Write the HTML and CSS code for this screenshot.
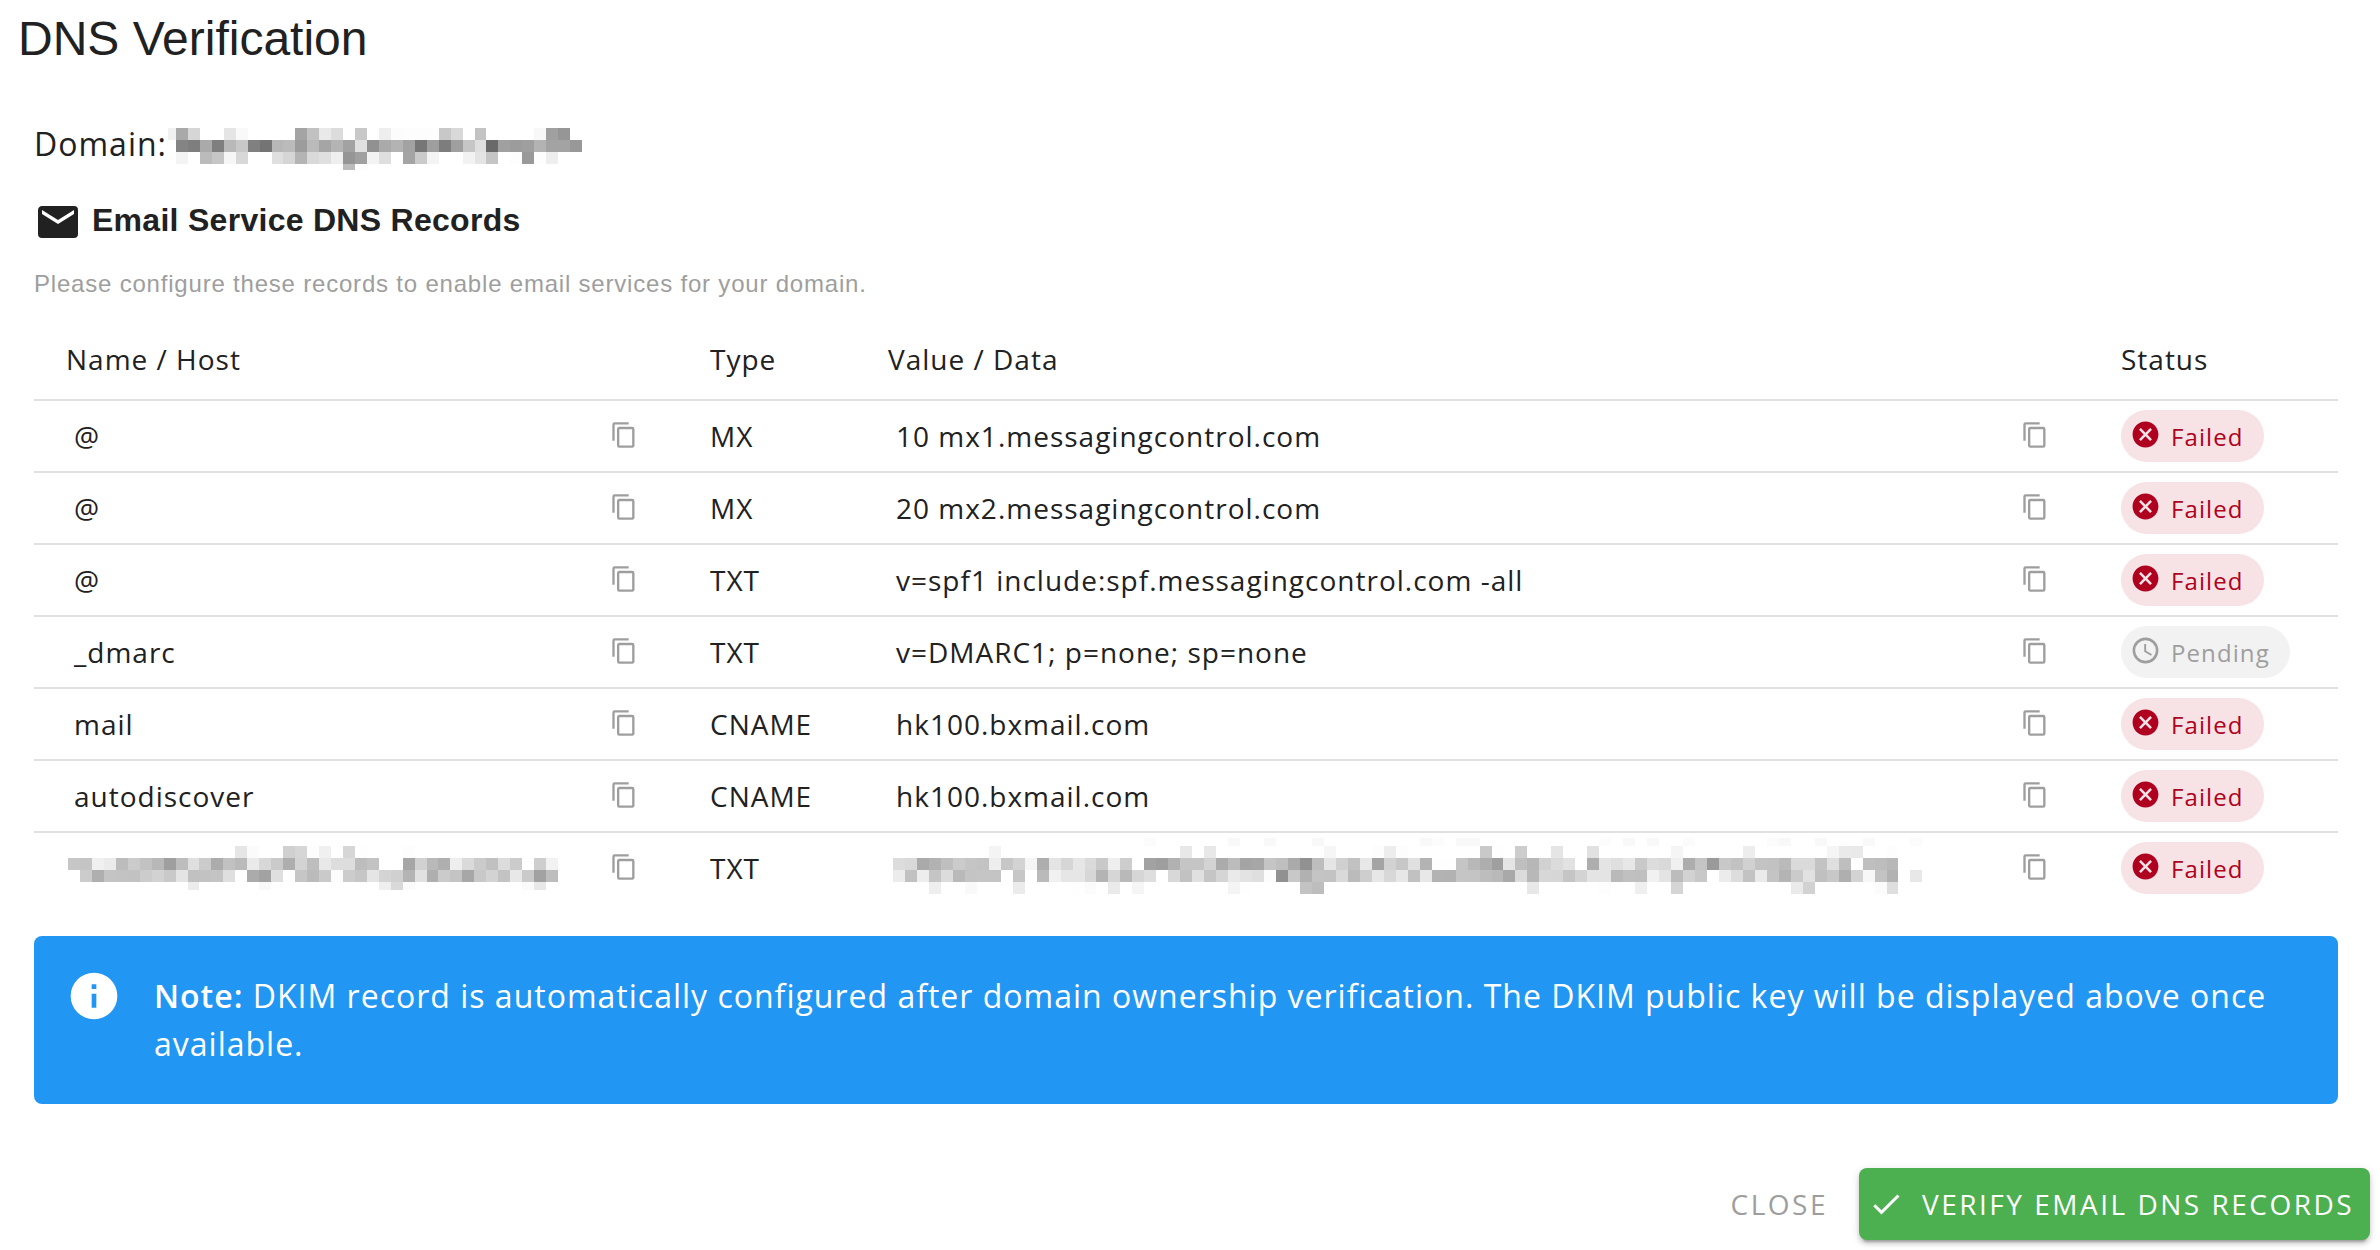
FILE: index.html
```html
<!DOCTYPE html>
<html lang="en">
<head>
  <meta charset="UTF-8">
  <title>DNS Verification</title>
  <meta name="viewport" content="width=device-width, initial-scale=1">
  <link rel="stylesheet" href="styles.css">
</head>
<body>
  <svg class="sprite" aria-hidden="true">
    <symbol id="i-copy" viewBox="0 0 24 24"><path d="M19 21H8V7h11m0-2H8a2 2 0 0 0-2 2v14a2 2 0 0 0 2 2h11a2 2 0 0 0 2-2V7a2 2 0 0 0-2-2m-3-4H4a2 2 0 0 0-2 2v14h2V3h12V1z"/></symbol>
    <symbol id="i-failed" viewBox="0 0 24 24"><path d="M12 2C6.47 2 2 6.47 2 12s4.47 10 10 10 10-4.47 10-10S17.53 2 12 2m5 13.59L15.59 17 12 13.41 8.41 17 7 15.59 10.59 12 7 8.41 8.41 7 12 10.59 15.59 7 17 8.41 13.41 12 17 15.59z"/></symbol>
    <symbol id="i-pending" viewBox="0 0 24 24"><path d="M12 20a8 8 0 0 0 8-8 8 8 0 0 0-8-8 8 8 0 0 0-8 8 8 8 0 0 0 8 8m0-18a10 10 0 0 1 10 10 10 10 0 0 1-10 10C6.47 22 2 17.5 2 12A10 10 0 0 1 12 2m.5 5v5.25l4.5 2.67-.75 1.23L11 13V7h1.5z"/></symbol>
  </svg>

  <div class="dialog">
    <h1 class="title">DNS Verification</h1>

    <div class="content">
      <div class="domain">Domain: <svg class="mosaic" id="domainMask"></svg></div>

      <h3 class="section-title">
        <svg class="icon-email" viewBox="0 0 24 24"><path d="M20 8l-8 5-8-5V6l8 5 8-5m0-2H4c-1.11 0-2 .89-2 2v12a2 2 0 0 0 2 2h16a2 2 0 0 0 2-2V6a2 2 0 0 0-2-2z"/></svg>
        <span>Email Service DNS Records</span>
      </h3>
      <p class="hint">Please configure these records to enable email services for your domain.</p>

      <table class="records">
        <colgroup>
          <col class="col-name"><col class="col-type"><col class="col-value"><col class="col-status">
        </colgroup>
        <thead>
          <tr><th>Name / Host</th><th>Type</th><th>Value / Data</th><th>Status</th></tr>
        </thead>
        <tbody>
          <tr>
            <td><div class="copyable"><span>@</span><svg class="copy"><use href="#i-copy"/></svg></div></td>
            <td>MX</td>
            <td><div class="copyable"><span>10 mx1.messagingcontrol.com</span><svg class="copy"><use href="#i-copy"/></svg></div></td>
            <td><span class="chip failed"><svg><use href="#i-failed"/></svg>Failed</span></td>
          </tr>
          <tr>
            <td><div class="copyable"><span>@</span><svg class="copy"><use href="#i-copy"/></svg></div></td>
            <td>MX</td>
            <td><div class="copyable"><span>20 mx2.messagingcontrol.com</span><svg class="copy"><use href="#i-copy"/></svg></div></td>
            <td><span class="chip failed"><svg><use href="#i-failed"/></svg>Failed</span></td>
          </tr>
          <tr>
            <td><div class="copyable"><span>@</span><svg class="copy"><use href="#i-copy"/></svg></div></td>
            <td>TXT</td>
            <td><div class="copyable"><span>v=spf1 include:spf.messagingcontrol.com -all</span><svg class="copy"><use href="#i-copy"/></svg></div></td>
            <td><span class="chip failed"><svg><use href="#i-failed"/></svg>Failed</span></td>
          </tr>
          <tr>
            <td><div class="copyable"><span>_dmarc</span><svg class="copy"><use href="#i-copy"/></svg></div></td>
            <td>TXT</td>
            <td><div class="copyable"><span>v=DMARC1; p=none; sp=none</span><svg class="copy"><use href="#i-copy"/></svg></div></td>
            <td><span class="chip pending"><svg><use href="#i-pending"/></svg>Pending</span></td>
          </tr>
          <tr>
            <td><div class="copyable"><span>mail</span><svg class="copy"><use href="#i-copy"/></svg></div></td>
            <td>CNAME</td>
            <td><div class="copyable"><span>hk100.bxmail.com</span><svg class="copy"><use href="#i-copy"/></svg></div></td>
            <td><span class="chip failed"><svg><use href="#i-failed"/></svg>Failed</span></td>
          </tr>
          <tr>
            <td><div class="copyable"><span>autodiscover</span><svg class="copy"><use href="#i-copy"/></svg></div></td>
            <td>CNAME</td>
            <td><div class="copyable"><span>hk100.bxmail.com</span><svg class="copy"><use href="#i-copy"/></svg></div></td>
            <td><span class="chip failed"><svg><use href="#i-failed"/></svg>Failed</span></td>
          </tr>
          <tr>
            <td><div class="copyable masked"><svg class="mosaic" id="nameMask"></svg><svg class="copy"><use href="#i-copy"/></svg></div></td>
            <td>TXT</td>
            <td><div class="copyable masked"><svg class="mosaic" id="valueMask"></svg><svg class="copy"><use href="#i-copy"/></svg></div></td>
            <td><span class="chip failed"><svg><use href="#i-failed"/></svg>Failed</span></td>
          </tr>
        </tbody>
      </table>

      <div class="alert">
        <svg class="icon-info" viewBox="0 0 24 24"><path d="M13 9h-2V7h2m0 10h-2v-6h2m-1-9A10 10 0 0 0 2 12a10 10 0 0 0 10 10 10 10 0 0 0 10-10A10 10 0 0 0 12 2z"/></svg>
        <p><strong>Note:</strong> DKIM record is automatically configured after domain ownership verification. The DKIM public key will be displayed above once available.</p>
      </div>
    </div>

    <div class="actions">
      <button class="btn-close" type="button">CLOSE</button>
      <button class="btn-verify" type="button">
        <svg viewBox="0 0 24 24"><path d="M21 7L9 19l-5.5-5.5 1.41-1.41L9 16.17 19.59 5.59 21 7z"/></svg>
        <span>VERIFY EMAIL DNS RECORDS</span>
      </button>
    </div>
  </div>

  <script src="mosaic.js"></script>
</body>
</html>
```

FILE: styles.css
```css
* {
  box-sizing: border-box;
}
body {
  margin: 0;
  background: #fff;
  color: #212121;
  font-family: "Open Sans", sans-serif;
  font-size: 28px;
}
svg {
  fill: currentColor;
  flex: none;
}
.sprite {
  display: none;
}
.dialog {
  width: 2380px;
  height: 1250px;
  overflow: hidden;
}
.title {
  margin: 0;
  padding: 7px 0 0 18px;
  height: 128px;
  font: 400 48px/63px "Liberation Sans", sans-serif;
}
.content {
  padding: 0 42px 0 34px;
}
.domain {
  display: flex;
  height: 42px;
  font-size: 32px;
  line-height: 31px;
  letter-spacing: 1px;
}
.domain .mosaic {
  margin-left: 1px;
}
.mosaic {
  display: block;
}
.section-title {
  display: flex;
  align-items: center;
  gap: 10px;
  margin: 28px 0 0;
  height: 48px;
  font: 700 32px/44px "Liberation Sans", sans-serif;
  letter-spacing: 0.28px;
}
.section-title span {
  padding-bottom: 4px;
}
.icon-email {
  width: 48px;
  height: 48px;
}
.hint {
  margin: 18px 0 0;
  height: 57px;
  font: 400 24px/40px "Liberation Sans", sans-serif;
  letter-spacing: 0.8px;
  color: #9e9e9e;
}

/* records table */
.records {
  width: 2304px;
  table-layout: fixed;
  border-collapse: separate;
  border-spacing: 0;
  letter-spacing: 1px;
}
.col-name {
  width: 644px;
}
.col-type {
  width: 178px;
}
.col-value {
  width: 1233px;
}
.col-status {
  width: 249px;
}
.records th {
  height: 80px;
  padding: 0 32px 2px;
  border-bottom: 2px solid #e0e0e0;
  font-weight: 400;
  text-align: left;
}
.records td {
  height: 72px;
  padding: 0 32px;
  border-bottom: 2px solid #e0e0e0;
}
.records tbody tr:last-child td {
  border-bottom-color: transparent;
}
.copyable {
  display: flex;
  align-items: center;
  justify-content: space-between;
  height: 70px;
  padding: 0 8px;
}
.copyable.masked {
  padding-left: 2px;
}
.masked .mosaic {
  align-self: flex-start;
  margin-top: 5px;
}
#valueMask {
  margin-left: 3px;
}
.copy {
  width: 28px;
  height: 28px;
  margin-bottom: 2px;
  color: #9e9e9e;
}
.chip {
  display: flex;
  align-items: center;
  width: fit-content;
  height: 52px;
  padding: 0 20px 0 9px;
  border-radius: 26px;
  font-size: 24px;
  letter-spacing: 1.1px;
}
.chip svg {
  width: 31px;
  height: 31px;
  margin: 0 10px 4px 0;
}
.failed {
  background: #f7e2e5;
  color: #b00020;
}
.pending {
  background: #f2f2f2;
  color: #9e9e9e;
}

/* note */
.alert {
  display: flex;
  height: 168px;
  margin-top: 31px;
  padding: 32px;
  border-radius: 8px;
  background: #2196f3;
  color: #fff;
  font-size: 32px;
  line-height: 48px;
  letter-spacing: 1px;
}
.alert p {
  margin: 4px 0 0 32px;
}
.alert strong {
  font-weight: 600;
}
.icon-info {
  width: 56px;
  height: 56px;
}

.actions {
  display: flex;
  justify-content: flex-end;
  align-items: center;
  gap: 31px;
  padding: 64px 10px 0 0;
}
.actions button {
  height: 72px;
  padding: 0;
  border: none;
  background: none;
  font-family: inherit;
  font-size: 28px;
  letter-spacing: 2.5px;
  color: #9e9e9e;
}
.actions .btn-verify {
  display: flex;
  align-items: center;
  gap: 18px;
  width: 511px;
  padding-left: 9px;
  border-radius: 8px;
  background: #4caf50;
  color: #fff;
  white-space: nowrap;
  box-shadow: 0 6px 2px -4px rgba(0,0,0,0.2), 0 4px 4px rgba(0,0,0,0.14), 0 2px 10px rgba(0,0,0,0.12);
}
.btn-verify svg {
  width: 36px;
  height: 36px;
}
```

FILE: mosaic.js
```js
// Pixelated stand-ins for private values.
// A row is [top, height, cells]; cells are grey levels, by column.
const list = s => s.split(" ");

const domainRows = [
  [0, 12, { "-0.68": "f1", 0: "a9", 1: "d6", 4: "e5", 5: "f9", 10: "a4", 11: "c1", 12: "e9", 13: "dc", 15: "c8", 17: "ee", 18: "fc", 19: "fd", 20: "fd", 21: "fd", 22: "c8", 23: "d9", 25: "c3", 30: "f8", 31: "a0", 32: "96" }],
  [12, 12, list("84 7e aa 7f b9 c8 80 74 b7 bb 9c ba a5 b4 a2 e0 91 aa b3 a2 76 9e 7d 9f c6 df 69 a0 9c 9f b3 a3 a3 98")],
  [24, 12, list("f4 ff bb c6 f6 d8 ff ff df d5 b4 d9 df ee 95 a0 f3 df ff a4 ca f4 ff ff f2 e4 c5 ff fd 99 fd ee")],
  [36, 6, { 14: "bb", 15: "fd" }]
];

const nameRows = [
  [8, 12, { 14: "e6", 15: "fb", 18: "d0", 19: "d6", 20: "fd", 21: "f0", 23: "d6", 24: "fe", 28: "fd" }],
  [20, 12, list("c6 c4 f0 eb bc cb c2 b8 9f bd df cb ac c1 ba ea d8 ca ae d3 be e8 dd dd bd c3 ff ff a6 d1 b9 af ee da cb c0 dc cb ff ce f2")],
  [32, 12, list("ff cc af c4 c3 c2 cc d2 c9 e4 c1 c2 c4 df fe ab a2 df fe c6 bb ca fc cc c6 e5 d4 d0 b4 e1 af cb c4 a7 c8 d3 c3 e8 ca a2 bd")],
  [44, 8, { 10: "ec", 16: "f9", 26: "ef", 27: "d9", 28: "fb", 38: "fa", 39: "e8" }]
];

const valueRows = [
  [0, 8, { 21: "fb", 28: "f8", 31: "f8", 35: "f8", 44: "f8", 45: "fc", 47: "f8", 48: "f8", 59: "fc", 61: "f8", 63: "f8", 66: "fb", 73: "fb", 74: "f8", 77: "f8", 81: "f9", 85: "fb" }],
  [8, 12, { 8: "f4", 24: "e8", 26: "e8", 36: "f6", 40: "fd", 41: "ed", 42: "fd", 49: "c9", 50: "fe", 52: "cd", 55: "e5", 58: "e1", 65: "f5", 71: "ed", 78: "f5", 79: "ea", 80: "e9", 83: "fd" }],
  [20, 12, list("dc d9 aa b2 bf cb c5 c3 ee c7 d3 f5 ae e4 d6 e6 da c9 ee cd ff a2 9e b1 c5 c5 d3 ab bc a4 a7 c5 bf aa 91 bd e5 d0 c1 e8 a4 d2 c7 e0 b3 fe fe c5 b8 ae 9f e5 bf b7 d1 db e2 ff ae e4 df e7 c9 dc d9 f0 ad c4 9a c8 c2 d1 c3 c2 ba da da c3 df be ff bf bd b8")],
  [32, 12, list("ec c1 ed c5 dc b9 c4 c5 c4 ff c7 ff ba f1 e6 e6 d7 b4 d6 b9 d6 de ff d8 c2 e0 c5 d5 ea e3 df fc 91 c8 b1 c4 c3 d9 bb ce e7 d8 e7 c1 e8 b3 b2 c5 c4 bd b9 a9 db b8 d7 d6 c5 d3 e4 e4 b9 c0 bf f1 e4 bc d2 c8 ff ec dd c3 ea c4 b4 cb e1 c0 c8 af d3 f7 c3 b2 ff e8")],
  [44, 12, { 3: "ee", 6: "f9", 10: "eb", 15: "fe", 16: "fb", 18: "ea", 20: "f5", 28: "f4", 29: "fe", 34: "c3", 35: "bd", 53: "e8", 59: "fd", 62: "ef", 65: "d5", 75: "ea", 76: "d2", 82: "fb", 83: "de" }]
];

function drawMosaic(id, rows, cell, cols, height, left) {
  const svg = document.getElementById(id);
  svg.setAttribute("width", Math.ceil(cols * cell + left));
  svg.setAttribute("height", height);
  let out = "";
  for (const [top, h, cells] of rows) {
    for (const [col, grey] of Object.entries(cells)) {
      // round both edges so that neighbouring cells meet on a pixel
      const x = Math.round(left + col * cell);
      const next = Math.round(left + (Math.floor(col) + 1) * cell);
      const end = col < 0 ? left : next;
      out += `<rect x="${x}" y="${top}" width="${end - x}" height="${h}" fill="#${grey}${grey}${grey}"/>`;
    }
  }
  svg.innerHTML = out;
}

drawMosaic("domainMask", domainRows, 11.94, 34, 42, 8);
drawMosaic("nameMask", nameRows, 11.95, 41, 60, 0);
drawMosaic("valueMask", valueRows, 11.97, 86, 60, 0);
```
